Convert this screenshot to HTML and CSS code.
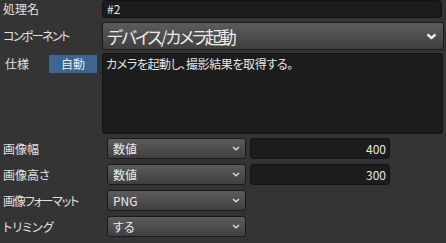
FILE: index.html
```html
<!DOCTYPE html>
<html lang="ja">
<head>
<meta charset="utf-8">
<link rel="stylesheet" href="styles.css">
</head>
<body>
<div class="panel">
  <div class="row r-name">
    <div class="label">処理名</div>
    <div class="input wide">#2</div>
  </div>
  <div class="row r-comp">
    <div class="label tight">コンポーネント</div>
    <div class="select big"><span class="big-text">デバイス/カメラ起動</span>
      <svg class="chev-big" width="11" height="7" viewBox="0 0 11 7"><path d="M1.5 1.5 L5.5 5 L9.5 1.5" fill="none" stroke="#f2f2f2" stroke-width="2.4"/></svg>
    </div>
  </div>
  <div class="row r-spec">
    <div class="label-spec">
      <span class="spec-text">仕様</span>
      <span class="auto-btn">自動</span>
    </div>
    <div class="textarea">カメラを起動し、撮影結果を取得する。</div>
  </div>
  <div class="params">
    <div class="prow">
      <div class="plabel">画像幅</div>
      <div class="select small"><span>数値</span><svg class="chev" width="8" height="5" viewBox="0 0 8 5"><path d="M1 1 L4 3.8 L7 1" fill="none" stroke="#dcdcdc" stroke-width="1.4"/></svg></div>
      <div class="input num">400</div>
    </div>
    <div class="prow">
      <div class="plabel">画像高さ</div>
      <div class="select small"><span>数値</span><svg class="chev" width="8" height="5" viewBox="0 0 8 5"><path d="M1 1 L4 3.8 L7 1" fill="none" stroke="#dcdcdc" stroke-width="1.4"/></svg></div>
      <div class="input num">300</div>
    </div>
    <div class="prow">
      <div class="plabel mid">画像フォーマット</div>
      <div class="select small"><span>PNG</span><svg class="chev" width="8" height="5" viewBox="0 0 8 5"><path d="M1 1 L4 3.8 L7 1" fill="none" stroke="#dcdcdc" stroke-width="1.4"/></svg></div>
    </div>
    <div class="prow">
      <div class="plabel">トリミング</div>
      <div class="select small"><span>する</span><svg class="chev" width="8" height="5" viewBox="0 0 8 5"><path d="M1 1 L4 3.8 L7 1" fill="none" stroke="#dcdcdc" stroke-width="1.4"/></svg></div>
    </div>
  </div>
</div>
</body>
</html>
```
FILE: styles.css
```css
html, body {
  margin: 0;
  padding: 0;
  background: #343434;
}
body {
  width: 446px;
  height: 243px;
  overflow: hidden;
  font-family: "Noto Sans CJK JP", "Noto Sans", sans-serif;
  font-feature-settings: "palt";
  color: #e2e2e2;
}
.panel {
  display: flex;
  flex-direction: column;
}
.row {
  display: flex;
  align-items: flex-start;
}
.label {
  width: 99px;
  padding-left: 3px;
  font-size: 12px;
  line-height: 18px;
  white-space: nowrap;
}
.tight {
  letter-spacing: -1.6px;
}
.mid {
  letter-spacing: -1.2px;
}
.input {
  box-sizing: border-box;
  background: #1c1c1c;
  border: 1px solid #141414;
  border-radius: 3px;
  color: #e6e6e6;
  font-size: 12px;
}
.wide {
  width: 340px;
  height: 18px;
  line-height: 16px;
  padding-left: 4px;
}
.r-comp {
  margin-top: 4px;
}
.r-comp .label {
  line-height: 28px;
}
.select {
  box-sizing: border-box;
  display: flex;
  align-items: center;
  justify-content: space-between;
  background: linear-gradient(#5c5c5c, #3f3f3f);
  border: 1px solid #1a1a1a;
  color: #ececec;
}
.big {
  width: 342px;
  height: 28px;
  padding: 0 6px 0 4px;
  font-size: 17px;
  border-radius: 2px;
}
.big-text {
  letter-spacing: -2px;
}
.r-spec {
  margin-top: 3px;
}
.label-spec {
  width: 97px;
  display: flex;
  align-items: center;
  margin-top: 2px;
  margin-right: 5px;
}
.spec-text {
  width: 44px;
  padding-left: 5px;
  font-size: 12px;
  line-height: 18px;
}
.auto-btn {
  width: 48px;
  height: 18px;
  background: #3c6591;
  color: #e8eef5;
  font-size: 12px;
  line-height: 18px;
  text-align: center;
}
.textarea {
  box-sizing: border-box;
  width: 341px;
  height: 81px;
  background: #1c1c1c;
  border: 1px solid #141414;
  border-radius: 3px;
  padding: 2px 3px;
  font-size: 12px;
  line-height: 16px;
  letter-spacing: -0.4px;
  color: #e6e6e6;
}
.params {
  margin-top: 4px;
  display: flex;
  flex-direction: column;
  gap: 5px;
}
.prow {
  display: flex;
  align-items: center;
  height: 21px;
}
.plabel {
  width: 104px;
  padding-left: 3px;
  font-size: 12px;
  white-space: nowrap;
}
.small {
  width: 139px;
  height: 21px;
  padding: 0 5px 0 5px;
  font-size: 12px;
  border-radius: 3px;
  margin-right: 4px;
}
.num {
  width: 140px;
  height: 21px;
  line-height: 19px;
  text-align: right;
  padding-right: 3px;
  font-size: 12px;
  border-radius: 3px;
}
```
